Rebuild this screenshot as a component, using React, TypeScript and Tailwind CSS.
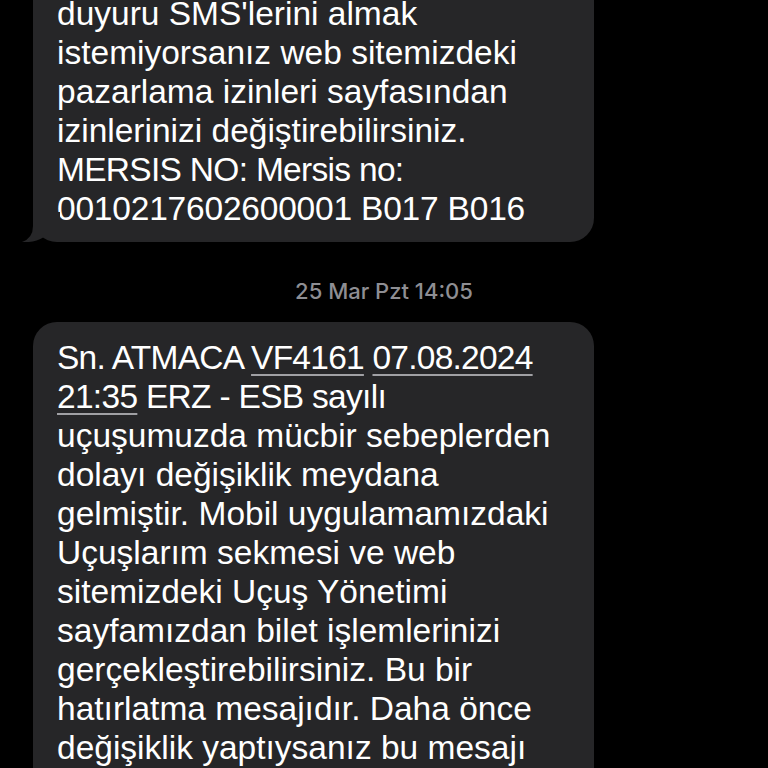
import React from "react";

const bodyFont = { fontFamily: "'Liberation Sans', Arial, sans-serif" };
const tsFont = { fontFamily: "Inter, 'Noto Sans', sans-serif" };

function Line({
  children,
  className = "",
}: {
  children: React.ReactNode;
  className?: string;
}) {
  return <div className={"whitespace-nowrap " + className}>{children}</div>;
}

function Link({ children }: { children: React.ReactNode }) {
  return (
    <span className="underline decoration-[#a0a0a4] decoration-[2px] underline-offset-[5px]">
      {children}
    </span>
  );
}

export default function App() {
  return (
    <div className="w-[768px] h-[768px] overflow-hidden bg-black text-white">
      <div className="flex flex-col">
        {/* first bubble */}
        <div className="relative ml-[33px] w-[561px] mt-[-60px]">
          <div
            className="rounded-[24px] bg-[#262628] pl-[24px] pr-[16px] pt-[54px] pb-[14px] text-[33.5px] leading-[39px]"
            style={bodyFont}
          >
            <Line>duyuru SMS'lerini almak</Line>
            <Line>istemiyorsanız web sitemizdeki</Line>
            <Line>pazarlama izinleri sayfasından</Line>
            <Line>izinlerinizi değiştirebilirsiniz.</Line>
            <Line className="tracking-[-0.7px]">MERSIS NO: Mersis no:</Line>
            <Line className="tracking-[-0.2px]">0010217602600001 B017 B016</Line>
          </div>
          <svg
            className="absolute left-[-13px] bottom-0"
            width="40"
            height="30"
            viewBox="0 0 40 30"
          >
            <path
              d="M13 0 L13 14 Q13 26 2 30 Q14 31 24 25 L40 10 L40 0 Z"
              fill="#262628"
            />
          </svg>
        </div>

        {/* timestamp */}
        <div
          className="mt-[37px] flex justify-center text-[22px] leading-[24px] text-[#8e8e93] font-medium"
          style={tsFont}
        >
          25 Mar Pzt 14:05
        </div>

        {/* second bubble */}
        <div className="relative ml-[33px] w-[561px] mt-[19px]">
          <div
            className="rounded-[24px] bg-[#262628] pl-[24px] pr-[16px] pt-[16px] pb-[14px] text-[33.5px] leading-[39px]"
            style={bodyFont}
          >
            <Line className="tracking-[-0.75px]">
              Sn. ATMACA <Link>VF4161</Link> <Link>07.08.2024</Link>
            </Line>
            <Line className="tracking-[-0.7px]">
              <Link>21:35</Link> ERZ - ESB sayılı
            </Line>
            <Line>uçuşumuzda mücbir sebeplerden</Line>
            <Line>dolayı değişiklik meydana</Line>
            <Line>gelmiştir. Mobil uygulamamızdaki</Line>
            <Line>Uçuşlarım sekmesi ve web</Line>
            <Line>sitemizdeki Uçuş Yönetimi</Line>
            <Line>sayfamızdan bilet işlemlerinizi</Line>
            <Line>gerçekleştirebilirsiniz. Bu bir</Line>
            <Line>hatırlatma mesajıdır. Daha önce</Line>
            <Line>değişiklik yaptıysanız bu mesajı</Line>
            <Line>dikkate almayınız.</Line>
          </div>
        </div>
      </div>
    </div>
  );
}
